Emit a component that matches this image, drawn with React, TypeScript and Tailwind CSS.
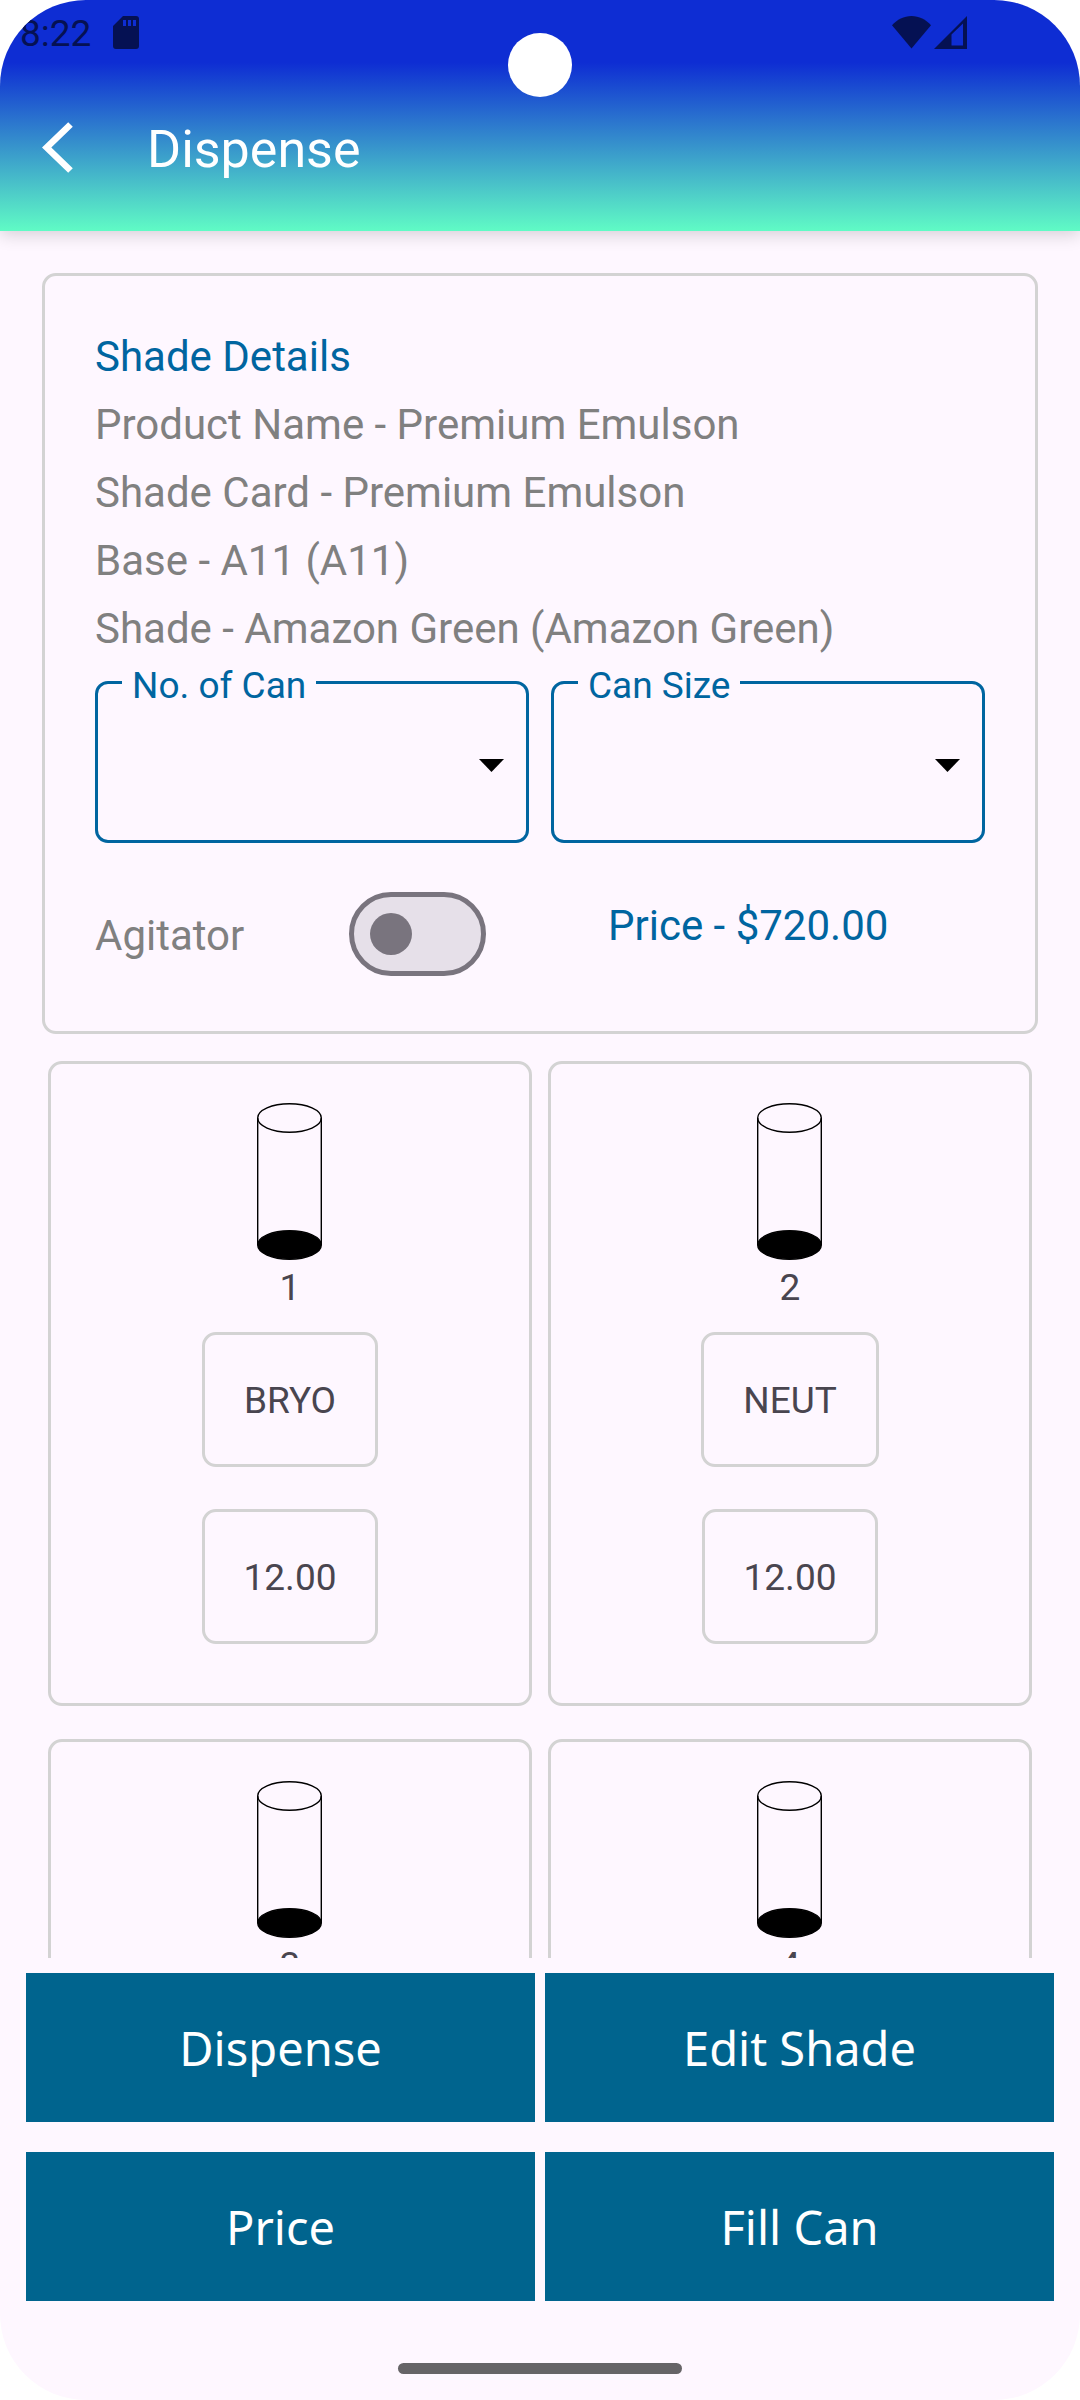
import { useState } from "react";

type Colorant = {
  can: number;
  name?: string;
  amount?: string;
};

const shadeDetails = [
  "Product Name - Premium Emulson",
  "Shade Card - Premium Emulson",
  "Base - A11 (A11)",
  "Shade - Amazon Green (Amazon Green)",
];

const colorants: Colorant[] = [
  { can: 1, name: "BRYO", amount: "12.00" },
  { can: 2, name: "NEUT", amount: "12.00" },
  { can: 3 },
  { can: 4 },
];

const actions = ["Dispense", "Edit Shade", "Price", "Fill Can"];

const StatusBar = () => (
  <div className="flex h-16 items-center pl-5 pr-[113px] text-[#051153]">
    <span className="pt-0.5 text-[37px] leading-none">8:22</span>
    <svg className="ml-[22px] h-[33px] w-[26px]" viewBox="0 0 26 33" fill="currentColor">
      <path
        fillRule="evenodd"
        d="M10 0H23Q26 0 26 3V30Q26 33 23 33H3Q0 33 0 30V10ZM10 4V10H13V4ZM15 4V10H18V4ZM20 4V10H23V4Z"
      />
    </svg>
    <svg className="ml-auto h-[33px] w-[39px]" viewBox="0 0 39 33" fill="currentColor">
      <path d="M0 9.3C5 3.6 12 0 19.5 0S34 3.6 39 9.3L19.5 32.5Z" />
    </svg>
    <svg className="ml-[3px] h-[33px] w-[33px]" viewBox="0 0 33 33" fill="currentColor">
      <path fillRule="evenodd" d="M0 33L33 0V33ZM17.5 18.5V29.5H29V7.5Z" />
    </svg>
  </div>
);

const Header = () => (
  <header className="relative z-10 bg-linear-to-b/srgb from-[#0e2dd3] from-27% to-[#60fbc5] shadow-[0_4px_16px_rgba(0,0,0,0.16)]">
    <StatusBar />
    {/* Camera cutout */}
    <div className="absolute left-1/2 top-[33px] size-16 -translate-x-1/2 rounded-full bg-white" />
    <div className="flex h-[167px] items-center gap-[74px] pl-[42px] text-white">
      <button type="button" aria-label="Back">
        <svg
          className="h-[51px] w-[31px]"
          viewBox="0 0 31 51"
          fill="none"
          stroke="currentColor"
          strokeWidth="6.6"
        >
          <path d="M28.5 2.5L4.7 25.5L28.5 48.5" />
        </svg>
      </button>
      <h1 className="pt-1 text-[52px] leading-none">Dispense</h1>
    </div>
  </header>
);

const OutlinedSelect = ({ id, label }: { id: string; label: string }) => (
  <fieldset className="min-w-0 rounded-[13px] border-[3px] border-[#0065a0]">
    <legend className="ml-6 px-[10px] pt-2 text-[37px] leading-[30px] text-[#0065a0]">
      <label htmlFor={id}>{label}</label>
    </legend>
    <div className="relative">
      <select
        id={id}
        className="block h-[139px] w-full appearance-none bg-transparent px-9 text-[42px] text-[#49454f] outline-none"
      >
        <option value=""></option>
      </select>
      <svg
        className="pointer-events-none absolute right-[22px] top-[58px] h-[13px] w-[25px]"
        viewBox="0 0 25 13"
      >
        <path d="M0 0H25L12.5 13Z" />
      </svg>
    </div>
  </fieldset>
);

const ShadeCard = () => {
  const [agitator, setAgitator] = useState(false);

  return (
    <section className="mx-[42px] rounded-[14px] border-[3px] border-[#d3d3d3] px-[50px] pb-[55px] pt-[47px] text-[42px] leading-[68px] text-[#808080]">
      <h2 className="text-[#0065a0]">Shade Details</h2>
      {shadeDetails.map((line) => (
        <p key={line}>{line}</p>
      ))}

      <div className="grid grid-cols-2 gap-x-[22px]">
        <OutlinedSelect id="can-count" label="No. of Can" />
        <OutlinedSelect id="can-size" label="Can Size" />
      </div>

      <div className="mt-[49px] grid grid-cols-2 gap-x-[22px]">
        <div className="flex items-center justify-between pr-[43px]">
          <label htmlFor="agitator" className="pt-1">
            Agitator
          </label>
          <input
            id="agitator"
            type="checkbox"
            role="switch"
            checked={agitator}
            onChange={(e) => setAgitator(e.target.checked)}
            className="flex h-[84px] w-[137px] appearance-none items-center rounded-full border-[5px] border-[#79747e] bg-[#e6e0e9] px-4 before:size-[42px] before:rounded-full before:bg-[#79747e] checked:justify-end"
          />
        </div>
        <p className="pl-[57px] text-[#0065a0]">Price - $720.00</p>
      </div>
    </section>
  );
};

const CanIcon = () => (
  <svg
    className="h-[157px] w-[66px]"
    viewBox="0 0 66 157"
    fill="none"
    stroke="black"
    strokeWidth="1.4"
  >
    <ellipse cx="32.5" cy="15" rx="31.8" ry="14.2" />
    <path d="M0.7 15V142M64.3 15V142" />
    <ellipse cx="32.5" cy="142" rx="31.8" ry="14.2" fill="black" />
  </svg>
);

const ColorantCard = ({ can, name, amount }: Colorant) => (
  <li className="flex min-h-[645px] flex-col items-center rounded-[14px] border-[3px] border-[#d3d3d3] pt-[39px] text-[37px] leading-[43px] text-[#49454f]">
    <CanIcon />
    <span className="mt-[6px]">{can}</span>
    {name && (
      <div className="mt-[23px] rounded-[14px] border-[3px] border-[#d3d3d3] px-[39px] pb-[42px] pt-[44px]">
        {name}
      </div>
    )}
    {amount && (
      <div className="mt-[42px] rounded-[14px] border-[3px] border-[#d3d3d3] px-[39px] pb-[42px] pt-[44px]">
        {amount}
      </div>
    )}
  </li>
);

const App = () => {
  return (
    <div className="flex h-screen flex-col overflow-hidden rounded-[86px] bg-[#fef7ff] font-[Roboto,sans-serif]">
      <Header />

      <main className="flex min-h-0 flex-1 flex-col pt-[42px]">
        <ShadeCard />
        <ul className="mt-[27px] grid min-h-0 flex-1 auto-rows-max grid-cols-2 gap-x-4 gap-y-[33px] overflow-hidden px-12">
          {colorants.map((colorant) => (
            <ColorantCard key={colorant.can} {...colorant} />
          ))}
        </ul>
      </main>

      <footer className="flex flex-col items-center px-[26px] pb-[26px] pt-[15px]">
        <div className="grid w-full grid-cols-2 gap-x-[10px] gap-y-[30px]">
          {actions.map((action) => (
            <button
              key={action}
              type="button"
              className="h-[149px] bg-[#00648e] pt-0.5 font-['Noto_Sans',sans-serif] text-[47px] text-white"
            >
              {action}
            </button>
          ))}
        </div>
        {/* Gesture bar */}
        <div className="mt-[62px] h-[11px] w-[284px] rounded-full bg-[#666467]" />
      </footer>
    </div>
  );
};

export default App;
